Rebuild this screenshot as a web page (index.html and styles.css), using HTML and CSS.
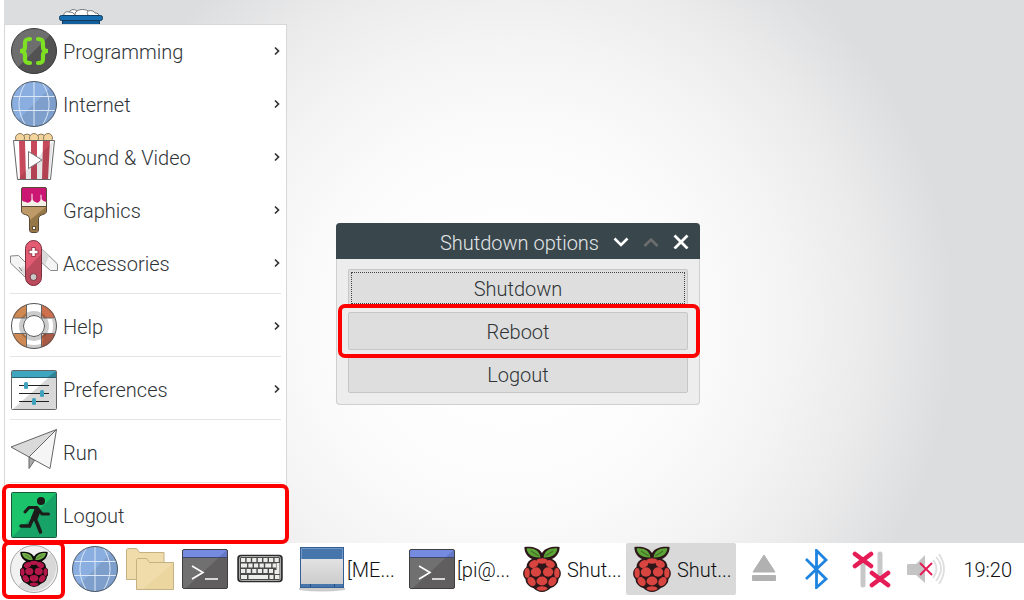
FILE: index.html
```
<!DOCTYPE html>
<html lang="en">
<head>
    <meta charset="UTF-8">
    <title>Raspberry Pi Desktop</title>

    <link rel="stylesheet" href="styles.css">
</head>
<body>
<!-- icons used more than once -->
<svg class="sprites" width="0" height="0" aria-hidden="true">
    <symbol id="globe" viewBox="0 0 48 48">
        <circle cx="24" cy="24" r="22.5" fill="#8aaedf"/>
        <path d="M40 8a22.500 22.500 0 0 1-32 32z" fill="#7e9fcb"/>
        <path d="M24 2v44M3 16.500h42M3 30.500h42M15 4c-8 13-8 27 0 40M33 4c8 13 8 27 0 40" fill="none" stroke="#dce8f7"/>
        <circle cx="24" cy="24" r="22.500" fill="none" stroke="#4c5866"/>
    </symbol>
    <symbol id="terminal" viewBox="0 0 48 48">
        <rect x="1.500" y="4.500" width="45" height="39" rx="1.500" fill="#707070"/>
        <path d="M46 5v38H5z" fill="#605e5f"/>
        <path d="M2 5h44v7H2z" fill="#748be0"/>
        <path d="M46 5v7h-8z" fill="#6578c6"/>
        <rect x="1.500" y="4.500" width="45" height="39" rx="1.500" fill="none" stroke="#3f3f43"/>
        <path d="M2 12.500h44" stroke="#3f4670"/>
        <path d="M11 21l11 6.500L11 34M24 34h13" fill="none" stroke="#fff" stroke-width="1.600"/>
    </symbol>
    <symbol id="raspberry" viewBox="0 -1 36 48">
        <g transform="translate(-1.800 0) scale(1.100 1)">
            <path class="outline" d="M18 7C15 1 7 0 2 1c0 6 3 10 7 12-4 2-5 5-5 8-4 3-4 9-1 12 0 5 4 8 7 9 2 2 5 4 8 4s6-2 8-4c3-1 7-4 7-9 3-3 3-9-1-12 0-3-1-6-5-8 4-2 7-6 7-12-5-1-13 0-16 6z"/>
            <path class="leaf" d="M4 2.500c6-1 12 2 12.500 9C9 12 4.500 8 4 2.500zM32 2.500c-6-1-12 2-12.500 9C27 12 31.500 8 32 2.500z"/>
            <path class="vein" d="M8 5l7 5M28 5l-7 5"/>
            <g class="berry">
                <ellipse cx="18" cy="15" rx="5" ry="2.700"/>
                <ellipse cx="10.500" cy="18" rx="4.500" ry="3.500" transform="rotate(-35 10.500 18)"/>
                <ellipse cx="25.500" cy="18" rx="4.500" ry="3.500" transform="rotate(35 25.500 18)"/>
                <ellipse cx="12.500" cy="26" rx="4.700" ry="4.700"/>
                <ellipse cx="23.500" cy="26" rx="4.700" ry="4.700"/>
                <ellipse cx="4.500" cy="27" rx="2.400" ry="4.900"/>
                <ellipse cx="31.500" cy="27" rx="2.400" ry="4.900"/>
                <ellipse cx="18" cy="35" rx="5" ry="4.400"/>
                <ellipse cx="8.500" cy="35.500" rx="3.400" ry="4.800" transform="rotate(-30 8.500 35.500)"/>
                <ellipse cx="27.500" cy="35.500" rx="3.400" ry="4.800" transform="rotate(30 27.500 35.500)"/>
                <ellipse cx="18" cy="42.500" rx="5" ry="2.200"/>
            </g>
        </g>
    </symbol>
    <symbol id="arrow" viewBox="0 0 8 10">
        <path d="M2 1.500L5.500 5 2 8.500" fill="none" stroke="#333" stroke-width="1.700"/>
    </symbol>
</svg>

<div class="desktop">
    <svg class="trash" viewBox="0 0 44 20" aria-label="Wastebasket">
        <path d="M5 7c-1-3 2-5 5-4 2-3 6-3 8-1 3-2 8-2 11 0 3-1 6 0 7 2 3 0 4 1 4 4z" fill="#fff" stroke="#777"/>
        <path d="M10 3c3 0 5 1 6 3M18 2c-2 1-2 3-2 5M29 2c-1 1-1 2 0 4" fill="none" stroke="#777"/>
        <path d="M3.500 8v12h37V8" fill="#125f9c" stroke="#123c5e"/>
        <rect x=".5" y="6.500" width="43" height="5" rx="2" fill="#176eb0" stroke="#123c5e"/>
    </svg>

    <div class="window">
        <div class="titlebar">
            <span class="title">Shutdown options</span>
            <button class="winBtn" aria-label="Minimize">
                <svg viewBox="0 0 16 16"><path d="M1.500 5.500L8 12l6.500-6.500" fill="none" stroke="#fff" stroke-width="2.600"/></svg>
            </button>
            <button class="winBtn" aria-label="Maximize" disabled>
                <svg viewBox="0 0 16 16"><path d="M1.500 13L8 6.500l6.500 6.500" fill="none" stroke="#6d6d6d" stroke-width="2.600"/></svg>
            </button>
            <button class="winBtn" aria-label="Close">
                <svg viewBox="0 0 16 16"><path d="M1.500 2.500l13 13M14.500 2.500l-13 13" fill="none" stroke="#fff" stroke-width="2.800"/></svg>
            </button>
        </div>
        <div class="options">
            <button class="option focused">Shutdown</button>
            <button class="option marked">Reboot</button>
            <button class="option">Logout</button>
        </div>
    </div>

    <nav class="menu">
        <button class="menuItem">
            <svg class="icon" viewBox="0 0 48 48">
                <circle cx="24" cy="24" r="22.500" fill="#6e6e6e"/>
                <path d="M40 8a22.500 22.500 0 0 1-32 32z" fill="#525252"/>
                <circle cx="24" cy="24" r="22.500" fill="none" stroke="#3c3c3c"/>
                <path d="M20 12c-4 0-5 1-5 4v4c0 3-2 4-5 4 3 0 5 1 5 4v4c0 3 1 4 5 4M28 12c4 0 5 1 5 4v4c0 3 2 4 5 4-3 0-5 1-5 4v4c0 3-1 4-5 4" fill="none" stroke="#7ee022" stroke-width="4.200" stroke-linecap="round"/>
            </svg>
            <span class="label">Programming</span>
            <svg class="arrow"><use href="#arrow"/></svg>
        </button>
        <button class="menuItem">
            <svg class="icon"><use href="#globe"/></svg>
            <span class="label">Internet</span>
            <svg class="arrow"><use href="#arrow"/></svg>
        </button>
        <button class="menuItem">
            <svg class="icon" viewBox="0 0 48 48">
                <g fill="#f3d49c" stroke="#8b7a5a">
                    <circle cx="17" cy="5" r="4"/>
                    <circle cx="31" cy="5" r="4"/>
                    <circle cx="10" cy="5" r="4.500"/>
                    <circle cx="24" cy="5" r="4.500"/>
                    <circle cx="38" cy="5" r="4.500"/>
                </g>
                <path d="M3.500 7.500h41l-4 39h-33z" fill="#fff"/>
                <path d="M9 7.500h6l1 39H10zM21 7.500h6v39h-6zM33 7.500h7l-2 39h-6z" fill="#c74a5c"/>
                <path d="M43 8l-3.500 38H8z" fill="#000" opacity=".1"/>
                <path d="M3.500 7.500h41l-4 39h-33z" fill="none" stroke="#666"/>
                <path d="M18.500 18.500v17L32 27z" fill="#fff" stroke="#777"/>
            </svg>
            <span class="label">Sound &amp; Video</span>
            <svg class="arrow"><use href="#arrow"/></svg>
        </button>
        <button class="menuItem">
            <svg class="icon" viewBox="0 0 48 48">
                <path d="M11.500 20v5c0 5 8 2 8 8v11c0 3 9 3 9 0V33c0-6 8-3 8-8v-5z" fill="#be9a69"/>
                <path d="M36 21v4c0 5-8 2-8 8v11c0 3-8 3-8 1V34z" fill="#967747"/>
                <path d="M11.500 13h25v7h-25z" fill="#f4f1e7"/>
                <path d="M11.500 3q0-1.500 1.500-1.500h22q1.500 0 1.500 1.500v13q-3 0-5-3V9q-1-1-1 0v5q-2 4-5 2-3-1-3-4V8q-1-1-1 0v6q-2 4-6 2-2 0-4-2z" fill="#cb1674"/>
                <path d="M11.500 3q0-1.500 1.500-1.500h22q1.500 0 1.500 1.500v22c0 5-8 2-8 8v11q0 2.500-2.500 2.500h-4q-2.500 0-2.500-2.500V33c0-6-8-3-8-8zM11.500 20.500h25" fill="none" stroke="#5b4938"/>
                <rect x="22.500" y="40.500" width="3" height="3" fill="#fff" stroke="#655032"/>
            </svg>
            <span class="label">Graphics</span>
            <svg class="arrow"><use href="#arrow"/></svg>
        </button>
        <button class="menuItem">
            <svg class="icon" viewBox="0 0 48 48">
                <path d="M.5 17v7L16 39V24l-7.500-7.500z" fill="#f4f4f4" stroke="#888"/>
                <path d="M9 31l4-4 4 3v9z" fill="#ddd"/>
                <path d="M9 28l3 4" stroke="#777"/>
                <path d="M31 9l16.500 16v6.500h-7L30 22z" fill="#f4f4f4" stroke="#888"/>
                <path d="M32 10l7 7-4 9-4-4z" fill="#d9d9d9"/>
                <rect x="15.500" y="1.500" width="16" height="45" rx="8" fill="#e35c73"/>
                <path d="M31 15v24c0 10-15 10-15 0v-8z" fill="#bd4b5e"/>
                <rect x="15.500" y="1.500" width="16" height="45" rx="8" fill="none" stroke="#78303d"/>
                <path d="M23.500 8v10M18.500 13h10" stroke="#9c3f50" stroke-width="4.500"/>
                <path d="M23.500 9v8M19.500 13h8" stroke="#fff" stroke-width="2.500"/>
                <circle cx="23.500" cy="38" r="3.500" fill="#c8c8c8" stroke="#813443"/>
            </svg>
            <span class="label">Accessories</span>
            <svg class="arrow"><use href="#arrow"/></svg>
        </button>
        <hr class="separator">
        <button class="menuItem">
            <svg class="icon" viewBox="0 0 48 48">
                <path fill-rule="evenodd" d="M24 1.500a22.500 22.500 0 1 0 0 45 22.500 22.500 0 1 0 0-45zM24 14a10 10 0 1 1 0 20 10 10 0 1 1 0-20z" fill="#fff"/>
                <path d="M16 3C9 5 4 10 3 16h11l3-3zM3 32c2 7 7 12 13 13V34l-2-2z" fill="#cf8953"/>
                <path d="M32 3c7 2 12 7 13 13H34l-2-2zM45 32c-2 7-7 12-13 13V34l2-2z" fill="#cc704e"/>
                <path d="M34 32h11c-2 7-7 12-13 13z" fill="#a85a45"/>
                <circle cx="24" cy="24" r="13" fill="none" stroke="#000" stroke-width="4" opacity=".2"/>
                <path d="M17 45.500q7 2 14 0V42q-7 2-14 0zM45 17q3 7 0 14h-3q2-7 0-14z" fill="#ccc"/>
                <path d="M16.500 3v13h-13M31.500 3v13h13M16.500 45V31.500h-13M31.500 45V31.500h13" fill="none" stroke="#666"/>
                <circle cx="24" cy="24" r="22.500" fill="none" stroke="#555"/>
                <circle cx="24" cy="24" r="10.500" fill="#fff" stroke="#555"/>
            </svg>
            <span class="label">Help</span>
            <svg class="arrow"><use href="#arrow"/></svg>
        </button>
        <hr class="separator">
        <button class="menuItem">
            <svg class="icon" viewBox="0 0 48 48">
                <rect x="1.500" y="5.500" width="45" height="39" rx="1" fill="#fff"/>
                <path d="M46 6v38H3z" fill="#d8d8d8"/>
                <path d="M2 6h44v6H2z" fill="#40a6bf"/>
                <path d="M46 6v6h-8z" fill="#318295"/>
                <rect x="1.500" y="5.500" width="45" height="39" rx="1" fill="none" stroke="#666"/>
                <path d="M2 12.500h44" stroke="#28606d"/>
                <path d="M9 20.500h30M9 28.500h30M9 36.500h30" stroke="#222"/>
                <g fill="#3fa2bb">
                    <rect x="14" y="17" width="4" height="7" rx="1.500"/>
                    <rect x="30" y="25" width="4" height="7" rx="1.500"/>
                    <rect x="22" y="33" width="4" height="7" rx="1.500"/>
                </g>
            </svg>
            <span class="label">Preferences</span>
            <svg class="arrow"><use href="#arrow"/></svg>
        </button>
        <hr class="separator">
        <button class="menuItem">
            <svg class="icon" viewBox="0 0 48 48">
                <path d="M46.500 1.500L1 19l18 10z" fill="#d9d9d9" stroke="#666"/>
                <path d="M46.500 1.500L19 29l21 11.500z" fill="#f5f5f5" stroke="#666"/>
                <path d="M19 29v11.500l5.500-8z" fill="#aaa" stroke="#666"/>
            </svg>
            <span class="label">Run</span>
        </button>
        <hr class="separator">
        <button class="menuItem marked">
            <svg class="icon" viewBox="0 0 48 48">
                <rect x="1.500" y="1.500" width="45" height="45" rx="1" fill="#1bc46b"/>
                <path d="M46 2v44H2z" fill="#17a267"/>
                <rect x="1.500" y="1.500" width="45" height="45" rx="1" fill="none" stroke="#17573a"/>
                <circle cx="31" cy="10" r="4" fill="#1c1c1b"/>
                <path d="M15 21l4-4.500h8l5 6.500h6.500" fill="none" stroke="#1c1c1b" stroke-width="3" stroke-linecap="round" stroke-linejoin="round"/>
                <path d="M28 18l-4 10" stroke="#1c1c1b" stroke-width="6.500"/>
                <path d="M23 27l-3.500 8H11M25 28l2 4 3.500 9" fill="none" stroke="#1c1c1b" stroke-width="3.500" stroke-linecap="round"/>
            </svg>
            <span class="label">Logout</span>
        </button>
    </nav>
</div>

<footer class="taskbar">
    <div class="launchers">
        <button class="launcher start marked" aria-label="Menu">
            <svg class="icon" viewBox="0 0 48 48">
                <circle cx="24" cy="24" r="23.500" fill="#f1f1f1"/>
                <path d="M41 8a23.500 23.500 0 0 1-33 33z" fill="#d8d8d8"/>
                <circle cx="24" cy="24" r="23.500" fill="none" stroke="#a5a5a5"/>
                <use href="#raspberry" x="10" y="5" width="28" height="38"/>
            </svg>
        </button>
        <button class="launcher" aria-label="Web Browser">
            <svg class="icon"><use href="#globe"/></svg>
        </button>
        <button class="launcher" aria-label="File Manager">
            <svg class="icon" viewBox="0 0 48 48">
                <path d="M.5 34.500v-30l1-1h9l3 4h24.500v27z" fill="#f0dcaa" stroke="#c3b183"/>
                <path d="M10.500 44.500v-30l1-1h9l3 4h24v27z" fill="#f0dcaa"/>
                <path d="M47 18v26H17z" fill="#ebd6a0"/>
                <path d="M10.500 44.500v-30l1-1h9l3 4h24v27z" fill="none" stroke="#c3b183"/>
            </svg>
        </button>
        <button class="launcher" aria-label="Terminal">
            <svg class="icon"><use href="#terminal"/></svg>
        </button>
        <button class="launcher" aria-label="Keyboard">
            <svg class="icon" viewBox="0 0 48 48">
                <rect x="2" y="10.500" width="44" height="26" rx="3" fill="#4a4a4a" stroke="#2c2c2c" stroke-width="1.500"/>
                <rect x="3.500" y="11.500" width="41" height="24" rx="2" fill="none" stroke="#aaa"/>
                <g fill="none" stroke="#ecece8" stroke-width="4.200">
                    <path d="M5 15h38" stroke-dasharray="4.200 1.400"/>
                    <path d="M5 20.500h35" stroke-dasharray="6 1.400 4.200 1.400 4.200 1.400 4.200 1.400"/>
                    <path d="M5 26h32" stroke-dasharray="4.200 1.400"/>
                    <path d="M5 32h6M12.500 32H32M33.500 32h4M39 32h4.500"/>
                </g>
                <path d="M43.500 18v11h-5v-4h2v-7z" fill="#ecece8"/>
            </svg>
        </button>
    </div>

    <div class="tasks">
        <button class="task">
            <svg class="icon" viewBox="0 0 48 48">
                <defs>
                    <linearGradient id="pane" x2="0" y2="1">
                        <stop stop-color="#ececec"/>
                        <stop offset="1" stop-color="#c9c9c9"/>
                    </linearGradient>
                </defs>
                <path d="M1 43h46v2q-23 3-46 0z" fill="#ccc"/>
                <rect x="2.500" y="2.500" width="43" height="40" fill="url(#pane)" stroke="#345f95"/>
                <path d="M3 3h42v11H3zM3 39h42v3H3z" fill="#4776ad"/>
                <path d="M3.500 14V3.500h41V14" fill="none" stroke="#7398c5"/>
                <path d="M12.500 39v3M36.500 39v3" stroke="#274d7b"/>
            </svg>
            <span class="label">[ME...</span>
        </button>
        <button class="task">
            <svg class="icon"><use href="#terminal"/></svg>
            <span class="label">[pi@...</span>
        </button>
        <button class="task">
            <svg class="icon pi"><use href="#raspberry"/></svg>
            <span class="label">Shut...</span>
        </button>
        <button class="task active">
            <svg class="icon pi"><use href="#raspberry"/></svg>
            <span class="label">Shut...</span>
        </button>
    </div>

    <div class="tray">
        <button class="trayBtn" aria-label="Eject">
            <svg viewBox="0 0 40 40">
                <path d="M21 6l11 17H10z" fill="#b1b1b1" stroke="#b1b1b1" stroke-linejoin="round"/>
                <rect x="9" y="26" width="24" height="6" rx="1" fill="#b1b1b1"/>
            </svg>
        </button>
        <button class="trayBtn" aria-label="Bluetooth">
            <svg viewBox="0 0 40 40">
                <path d="M9 10l20 20-9.500 8.500V1.500L29 11 9 30" fill="none" stroke="#1f83e0" stroke-width="2.800"/>
            </svg>
        </button>
        <button class="trayBtn" aria-label="Network">
            <svg viewBox="0 0 40 40">
                <path d="M12 14v22M29 5v20" stroke="#c8c8c8" stroke-width="5" stroke-linecap="round"/>
                <path d="M4 5l16 12M20 5L4 17M21 24l16 12M37 24L21 36" stroke="#e51c56" stroke-width="4.600" stroke-linecap="round"/>
            </svg>
        </button>
        <button class="trayBtn" aria-label="Volume">
            <svg viewBox="0 0 40 40">
                <path d="M2 16q0-1 1-1h8l9-9v28l-9-8H3q-1 0-1-1z" fill="#c4c4c4"/>
                <path d="M28 11q7 8 0 18M31 8q10 11 0 24M34 5q10 15 0 30" fill="none" stroke="#dedede" stroke-width="1.800"/>
                <path d="M15 14l12 12M27 14L15 26" stroke="#e51c56" stroke-width="2"/>
            </svg>
        </button>
        <time class="clock">19:20</time>
    </div>
</footer>
</body>
</html>
```

FILE: styles.css
```
* {
    box-sizing: border-box;
}

body {
    margin: 0;
    min-height: 100vh;
    display: flex;
    flex-direction: column;
    font-family: Roboto, "Noto Sans", sans-serif;
    font-size: 20px;
    font-weight: 300;
    line-height: 24px;
    color: #2f3437;
    background-color: white;
}

button {
    font: inherit;
    color: inherit;
    padding: 0;
    border: none;
    background: none;
}

svg {
    display: block;
}

.sprites {
    position: absolute;
}

.icon {
    width: 48px;
    height: 48px;
    flex-shrink: 0;
}

.label, .clock {
    padding-top: 2px;
}

/* red frame around the things to click */
.marked {
    position: relative;
    z-index: 1;
}

.marked::after {
    content: "";
    position: absolute;
    border: 4px solid red;
    border-radius: 7px;
    pointer-events: none;
}

/* desktop */
.desktop {
    position: relative;
    z-index: 1;
    flex: 1;
    min-height: 520px;
    margin-left: 4px;
    background: radial-gradient(circle 445px at 506px 320px, #ffffff 15%, #fbfbfb 42%, #f4f4f4 62%, #ebebec 80%, #dcddde 100%);
}

.trash {
    position: absolute;
    left: 55px;
    top: 9px;
    width: 44px;
    height: 20px;
}

/* main menu */
.menu {
    position: absolute;
    left: 0;
    bottom: 0;
    width: 283px;
    display: flex;
    flex-direction: column;
    padding-bottom: 1px;
    background-color: white;
    border: 1px solid #d8d8d8;
    border-bottom: none;
}

.menuItem {
    display: flex;
    align-items: center;
    gap: 5px;
    height: 53px;
    padding: 0 5px 2px;
    text-align: left;
}

.menuItem .label {
    flex: 1;
}

.menuItem .arrow {
    width: 8px;
    height: 10px;
}

.menuItem.marked::after {
    inset: -5px -3px -2px;
}

.separator {
    width: auto;
    height: 1px;
    margin: 3px 5px 6px;
    border: none;
    background-color: #e4e4e4;
}

/* dialog */
.window {
    position: absolute;
    left: 332px;
    top: 223px;
    width: 364px;
    border-radius: 4px;
    background-color: #ededed;
    box-shadow: inset 0 0 0 1px #cfcfcf;
}

.titlebar {
    display: flex;
    align-items: center;
    gap: 14px;
    height: 36px;
    padding: 0 11px;
    border-radius: 4px 4px 0 0;
    color: #e3e6e7;
    background-color: #39474d;
}

.title {
    flex: 1;
    padding-top: 3px;
    text-align: right;
}

.winBtn {
    width: 16px;
    height: 16px;
}

.options {
    display: flex;
    flex-direction: column;
    gap: 5px;
    padding: 10px 12px 12px;
}

.option {
    height: 38px;
    padding-top: 2px;
    border: 1px solid #c6c6c6;
    border-radius: 2px;
    background-color: #dedede;
}

.option.focused {
    outline: 1px dotted #444;
    outline-offset: -4px;
}

.option.marked::after {
    inset: -9px -13px -9px -11px;
}

/* taskbar */
.taskbar {
    display: flex;
    height: 57px;
    padding: 0 12px 5px 6px;
    color: #111;
    background-color: white;
}

.launchers {
    display: flex;
    align-items: center;
}

.launcher {
    width: 55px;
    display: flex;
    justify-content: center;
}

.start {
    width: 56px;
    margin-right: 5px;
}

.start.marked::after {
    inset: -4px -3px -6px -4px;
}

.start {
    --berry: #b5164a;
    --leaf: #72ae48;
    --outline: #0c0c0c;
}

.pi {
    --berry: #d8443f;
    --leaf: #5ba536;
    --outline: #2c1619;
}

.berry {
    fill: var(--berry);
}

.leaf {
    fill: var(--leaf);
}

.outline {
    fill: var(--outline);
}

.vein {
    fill: none;
    stroke: var(--outline);
    stroke-width: 1;
    opacity: .4;
}

.tasks {
    flex: 1;
    display: flex;
    margin-left: 9px;
}

.task {
    width: 110px;
    display: flex;
    align-items: center;
    gap: 1px;
    padding-left: 2px;
    border-radius: 2px;
    white-space: nowrap;
}

.task.active {
    background-color: #d9d9d9;
}

.tray {
    display: flex;
    align-items: center;
    gap: 14px;
}

.trayBtn svg {
    width: 40px;
    height: 40px;
}

.clock {
    margin-left: 4px;
}
```
